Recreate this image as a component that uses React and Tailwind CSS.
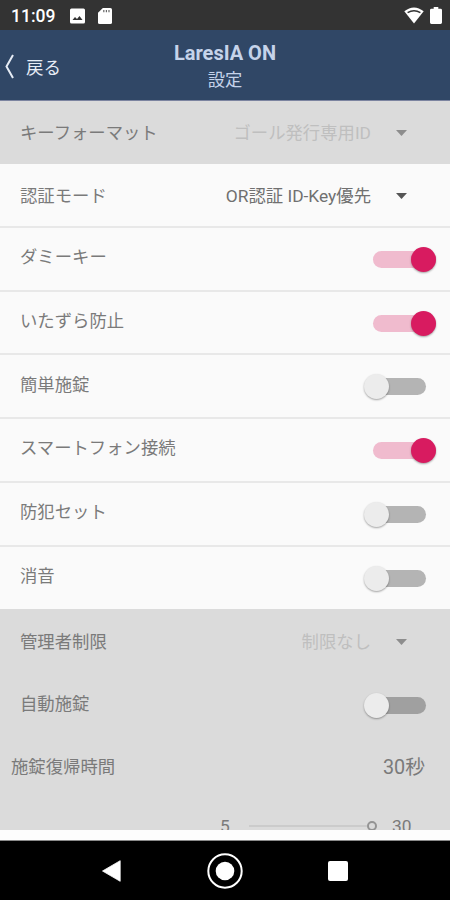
const fontStack = "font-[Roboto,'Noto_Sans_CJK_JP',sans-serif]";

function StatusBar() {
  return (
    <div className="flex h-[30px] shrink-0 items-center bg-[#333333] pl-[11px] pr-[8px] pt-px text-white">
      <span className="w-[59px] text-[17.5px] font-medium leading-[30px]">11:09</span>
      <svg className="h-[16px] w-[15px]" viewBox="0 0 15 16">
        <rect x="0" y="0.5" width="15" height="15" rx="1.5" fill="#fff" />
        <path d="M2.5 12 5 9l2 2 2.5-3 3 4z" fill="#333" />
      </svg>
      <svg className="ml-[13px] h-[16px] w-[14px]" viewBox="0 0 13 16" preserveAspectRatio="none">
        <path d="M4.5 0H11.5Q13 0 13 1.5V14.5Q13 16 11.5 16H1.5Q0 16 0 14.5V4.8z" fill="#fff" />
        <path d="M5.4 2v2.2M7.8 2v2.2M10.2 2v2.2" stroke="#666" strokeWidth="1.1" />
      </svg>
      <svg className="ml-auto h-[17px] w-[20px]" viewBox="0 0 20 17">
        <path d="M0.3 4.2Q10-3.4 19.7 4.2L10 16.5z" fill="#fff" />
        <path d="M3.6 5.7Q10 1.7 16.4 5.7" fill="none" stroke="#333" strokeWidth="1.5" />
      </svg>
      <svg className="ml-[6px] h-[17px] w-[12px]" viewBox="0 0 12 17">
        <path d="M3.7 0h4.6v1.8H10.6Q12 1.8 12 3.2V15.6Q12 17 10.6 17H1.4Q0 17 0 15.6V3.2Q0 1.8 1.4 1.8H3.7z" fill="#fff" />
      </svg>
    </div>
  );
}

function Header() {
  return (
    <div className="grid h-[71px] shrink-0 grid-cols-[1fr_auto_1fr] items-center border-b border-[#7c84a0] bg-[#304766]">
      <div className="flex items-center pl-[5px] pt-[3px] text-[#e6ecf5]">
        <svg className="h-[25px] w-[9px]" viewBox="0 0 9 25" fill="none" stroke="currentColor" strokeWidth="2">
          <path d="M8 1 1.5 12.5 8 24" />
        </svg>
        <span className="ml-[12px] pt-[2px] text-[17.5px] leading-6">戻る</span>
      </div>
      <div className="flex flex-col items-center pt-[4px] text-[#c5d3ea]">
        <div className="text-[20px] font-bold leading-[26px]">LaresIA ON</div>
        <div className="text-[17.3px] leading-[28px]">設定</div>
      </div>
      <div />
    </div>
  );
}

function Switch({ on, dim }) {
  if (on) {
    return (
      <div className="flex h-[17px] w-[63px] items-center justify-end rounded-full bg-[#f0bbce]">
        <div className="size-[25px] shrink-0 rounded-full bg-[#d81b60] shadow-[0_1px_2px_rgba(0,0,0,0.35)]" />
      </div>
    );
  }
  return (
    <div className="mr-[10px] flex w-[62px] items-center">
      <div className="z-10 size-[25px] shrink-0 rounded-full bg-[#ececec] shadow-[0_1px_2px_rgba(0,0,0,0.35)]" />
      <div className={`-ml-[12px] h-[17px] flex-1 rounded-r-full ${dim ? "bg-[#a0a0a0]" : "bg-[#b4b4b4]"}`} />
    </div>
  );
}

function Caret({ dim }) {
  return (
    <svg className="ml-[25px] mr-[29px] h-[6px] w-[11px]" viewBox="0 0 11 6">
      <path d="M0 0h11L5.5 6z" fill={dim ? "#8d8d8d" : "#555555"} />
    </svg>
  );
}

function SelectRow({ label, value, dim, className }) {
  return (
    <div className={`flex shrink-0 items-center pl-[20px] pr-[14px] ${className}`}>
      <span className="text-[#7a7a7a]">{label}</span>
      <span className={`ml-auto ${dim ? "text-[#bfbfbf]" : "text-[#707070]"}`}>{value}</span>
      <Caret dim={dim} />
    </div>
  );
}

function SwitchRow({ label, on, dim, className }) {
  return (
    <div className={`flex shrink-0 items-center justify-between pl-[20px] pr-[14px] ${className}`}>
      <span className="pb-[4px] text-[#7a7a7a]">{label}</span>
      <Switch on={on} dim={dim} />
    </div>
  );
}

function NavBar() {
  return (
    <div className="flex h-[59px] shrink-0 items-center bg-black pl-[102px]">
      <svg className="h-[22px] w-[19px]" viewBox="0 0 19 22">
        <path d="M0.5 11 18.2 0.7v20.6z" fill="#fff" stroke="#fff" strokeWidth="0.8" strokeLinejoin="round" />
      </svg>
      <svg className="ml-[86px] size-[36px]" viewBox="0 0 36 36">
        <circle cx="18" cy="18" r="16.7" fill="none" stroke="#fff" strokeWidth="2" />
        <circle cx="18" cy="18" r="9.3" fill="#fff" />
      </svg>
      <div className="ml-[85px] size-[20px] rounded-[2px] bg-white" />
    </div>
  );
}

export default function App() {
  const line = "border-b-2 border-[#e8e8e8]";
  return (
    <div className={`flex h-[900px] w-[450px] flex-col overflow-hidden bg-[#fafafa] text-[17.35px] leading-[26px] ${fontStack}`}>
      <StatusBar />
      <Header />
      <SelectRow label="キーフォーマット" value="ゴール発行専用ID" dim className="h-[63px] bg-[#dbdbdb]" />
      <SelectRow label="認証モード" value="OR認証 ID-Key優先" className={`h-[64px] pt-[2px] ${line}`} />
      <SwitchRow label="ダミーキー" on className={`h-[64px] ${line}`} />
      <SwitchRow label="いたずら防止" on className={`h-[63px] pt-px ${line}`} />
      <SwitchRow label="簡単施錠" className={`h-[64px] pt-px ${line}`} />
      <SwitchRow label="スマートフォン接続" on className={`h-[64px] ${line}`} />
      <SwitchRow label="防犯セット" className={`h-[64px] ${line}`} />
      <SwitchRow label="消音" className="h-[62px]" />
      <div className="flex h-[221px] shrink-0 flex-col overflow-hidden bg-[#dbdbdb]">
        <SelectRow label="管理者制限" value="制限なし" dim className="h-[65px]" />
        <SwitchRow label="自動施錠" dim className="h-[63px]" />
        <div className="flex h-[58px] shrink-0 items-center justify-between pl-[11px] pr-[25px] text-[#7a7a7a]">
          <span className="pt-px">施錠復帰時間</span>
          <span className="pt-[4px] text-[19.8px]">30秒</span>
        </div>
        <div className="flex h-[62px] shrink-0 items-center pl-[220px] text-[#7a7a7a]">
          <span className="w-[29px]">5</span>
          <div className="h-[2px] w-[118px] bg-[#cbcbcb]" />
          <div className="size-[10px] rounded-full border-2 border-[#949494]" />
          <span className="ml-[15px]">30</span>
        </div>
      </div>
      <div className="h-[11px] shrink-0 border-b border-[#8a8a8a] bg-[#fdfdfd]" />
      <NavBar />
    </div>
  );
}
